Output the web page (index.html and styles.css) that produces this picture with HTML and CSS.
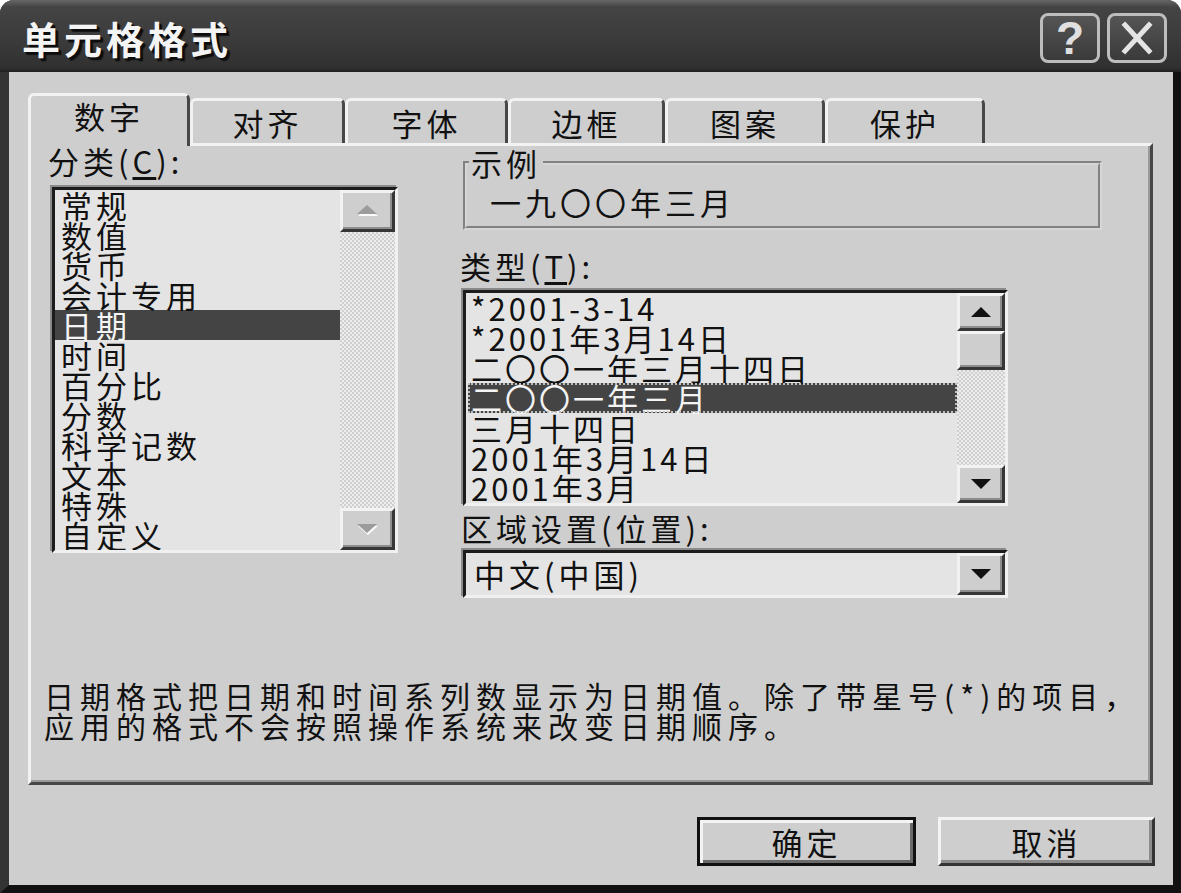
FILE: index.html
```html
<!DOCTYPE html>
<html lang="zh-CN">
<head>
<meta charset="utf-8">
<title>单元格格式</title>
<link rel="stylesheet" href="styles.css">
</head>
<body>
<div class="window">
  <div class="titlebar">
    <div class="title">单元格格式</div>
    <div class="tb-buttons">
      <div class="tb-btn help">?</div>
      <div class="tb-btn close">
        <svg width="40" height="36" viewBox="0 0 40 36"><path d="M8 5 L32 31 M32 5 L8 31" stroke="#e4e4e4" stroke-width="5" stroke-linecap="square"/></svg>
      </div>
    </div>
  </div>
  <div class="frame">
    <div class="tabs">
      <div class="tab active w1">数字</div>
      <div class="tab w2">对齐</div>
      <div class="tab w3">字体</div>
      <div class="tab w4">边框</div>
      <div class="tab w5">图案</div>
      <div class="tab w6">保护</div>
    </div>
    <div class="panel">
      <div class="cols">
        <div class="col-left">
          <div class="label label-cat">分类(<u>C</u>):</div>
          <div class="listbox list-cat">
            <div class="items">
              <div class="item">常规</div>
              <div class="item">数值</div>
              <div class="item">货币</div>
              <div class="item">会计专用</div>
              <div class="item selected">日期</div>
              <div class="item">时间</div>
              <div class="item">百分比</div>
              <div class="item">分数</div>
              <div class="item">科学记数</div>
              <div class="item">文本</div>
              <div class="item">特殊</div>
              <div class="item">自定义</div>
            </div>
            <div class="scrollbar">
              <div class="sbtn sbtn-l"><svg width="24" height="14" viewBox="0 0 24 14"><polygon points="12,3 22,12 2,12" fill="#fafafa"/><polygon points="11,1 21,10 1,10" fill="#9c9c9c"/></svg></div>
              <div class="track"></div>
              <div class="sbtn sbtn-l"><svg width="24" height="14" viewBox="0 0 24 14"><polygon points="2,4 22,4 12,13" fill="#fafafa"/><polygon points="1,2 21,2 11,11" fill="#9c9c9c"/></svg></div>
            </div>
          </div>
        </div>
        <div class="col-right">
          <fieldset class="sample">
            <legend>示例</legend>
            <div class="sample-text">一九〇〇年三月</div>
          </fieldset>
          <div class="label label-type">类型(<u>T</u>):</div>
          <div class="listbox list-type">
            <div class="items">
              <div class="item">*2001-3-14</div>
              <div class="item">*2001年3月14日</div>
              <div class="item">二〇〇一年三月十四日</div>
              <div class="item selected focus">二〇〇一年三月</div>
              <div class="item">三月十四日</div>
              <div class="item">2001年3月14日</div>
              <div class="item">2001年3月</div>
            </div>
            <div class="scrollbar">
              <div class="sbtn sbtn-r"><svg width="20" height="10" viewBox="0 0 20 10"><polygon points="10,0 20,10 0,10" fill="#111"/></svg></div>
              <div class="sbtn thumb"></div>
              <div class="track"></div>
              <div class="sbtn sbtn-r"><svg width="20" height="10" viewBox="0 0 20 10"><polygon points="0,0 20,0 10,10" fill="#111"/></svg></div>
            </div>
          </div>
          <div class="label label-locale">区域设置(位置):</div>
          <div class="combo">
            <div class="combo-text">中文(中国)</div>
            <div class="sbtn combo-btn"><svg width="20" height="10" viewBox="0 0 20 10"><polygon points="0,0 20,0 10,10" fill="#111"/></svg></div>
          </div>
        </div>
      </div>
      <div class="desc">日期格式把日期和时间系列数显示为日期值。除了带星号(*)的项目，<br>应用的格式不会按照操作系统来改变日期顺序。</div>
    </div>
    <div class="buttons">
      <div class="btn btn-default">确定</div>
      <div class="btn">取消</div>
    </div>
  </div>
</div>
</body>
</html>
```

FILE: styles.css
```css
* { box-sizing: border-box; }

html, body {
  margin: 0;
  padding: 0;
  background: #ffffff;
}

body {
  font-family: "Noto Sans CJK SC", "Noto Sans CJK JP", sans-serif;
  font-size: 31px;
  letter-spacing: 4px;
  color: #111111;
}

.window {
  width: 1181px;
  height: 893px;
  display: flex;
  flex-direction: column;
  border-radius: 14px 14px 0 0;
  overflow: hidden;
  background: #262626;
}

/* ---------- title bar ---------- */
.titlebar {
  height: 72px;
  flex: none;
  display: flex;
  align-items: center;
  justify-content: space-between;
  padding: 4px 14px 0 22px;
  background: linear-gradient(#676767 0, #444444 7px, #3b3b3b 40px, #303030 68px, #1f1f1f 72px);
}

.title {
  color: #f4f4f4;
  font-size: 38px;
  font-weight: bold;
  letter-spacing: 4px;
  text-shadow: 2px 2px 0 #0c0c0c, 3px 3px 1px #111111;
  margin-top: -2px;
}

.tb-buttons {
  display: flex;
  gap: 7px;
}

.tb-btn {
  width: 60px;
  height: 50px;
  border: 3px solid #bdbdbd;
  border-radius: 8px;
  background: linear-gradient(#555555, #3a3a3a);
  display: flex;
  align-items: center;
  justify-content: center;
}

.help {
  font-family: "Liberation Sans", Arial, sans-serif;
  font-weight: bold;
  font-size: 46px;
  color: #e0e0e0;
  letter-spacing: 0;
  line-height: 1;
}

/* ---------- frame ---------- */
.frame {
  flex: 1;
  display: flex;
  flex-direction: column;
  background: #cecece;
  border-style: solid;
  border-width: 0 8px 8px 9px;
  border-color: #2c2c2c #111111 #111111 #333333;
  padding: 21px 20px 19px 19px;
}

/* ---------- tabs ---------- */
.tabs {
  height: 50px;
  flex: none;
  display: flex;
  align-items: flex-end;
}

.tab {
  height: 45px;
  padding-top: 4px;
  text-align: center;
  line-height: 36px;
  border-style: solid;
  border-width: 3px 3px 0 3px;
  border-color: #f2f2f2 #474747 transparent #f2f2f2;
  border-radius: 6px 6px 0 0;
  background: #cecece;
}

.tab.active {
  height: 53px;
  margin-bottom: -3px;
  padding-top: 2px;
  position: relative;
  z-index: 2;
}

.w1 { width: 162px; }
.w2 { width: 155px; }
.w3 { width: 163px; }
.w4 { width: 157px; }
.w5 { width: 160px; }
.w6 { width: 160px; }

/* ---------- panel ---------- */
.panel {
  height: 642px;
  flex: none;
  border-style: solid;
  border-width: 3px;
  border-color: #f2f2f2 #474747 #474747 #f2f2f2;
  box-shadow: inset -2px -2px 0 #9a9a9a;
  display: flex;
  flex-direction: column;
}

.cols {
  display: flex;
}

.col-left {
  margin-left: 21px;
  width: 346px;
}

.col-right {
  margin-left: 65px;
  width: 639px;
}

.label {
  line-height: 36px;
  white-space: nowrap;
}

.label u {
  text-underline-offset: 3px;
}

.label-cat {
  margin-top: -3px;
  height: 44px;
  margin-left: -4px;
}

/* ---------- list boxes ---------- */
.listbox {
  display: flex;
  background: #e4e4e4;
  border-style: solid;
  border-width: 3px;
  border-color: #1c1c1c #f0f0f0 #f0f0f0 #1c1c1c;
  box-shadow: -2px -2px 0 #8a8a8a;
}

.list-cat {
  height: 366px;
}

.items {
  flex: 1;
  overflow: hidden;
}

.item {
  height: 30px;
  line-height: 30px;
  white-space: nowrap;
}

.list-cat .item {
  padding-left: 6px;
}

.list-type .item {
  padding-left: 3px;
  margin-left: 2px;
  font-size: 31px;
  letter-spacing: 3px;
}

.item.selected {
  background: #444444;
  color: #f4f4f4;
}

.item.focus {
  outline: 2px dotted #bdbdbd;
  outline-offset: -2px;
}

.scrollbar {
  display: flex;
  flex-direction: column;
  flex: none;
}

.list-cat .scrollbar {
  width: 55px;
}

.list-type .scrollbar {
  width: 48px;
}

.track {
  flex: 1;
  background: repeating-conic-gradient(#ededed 0 25%, #cfcfcf 0 50%) 0 0 / 4px 4px;
}

.sbtn {
  flex: none;
  display: flex;
  align-items: center;
  justify-content: center;
  background: #cecece;
  border-style: solid;
  border-width: 3px;
  border-color: #f2f2f2 #363636 #363636 #f2f2f2;
  box-shadow: inset -2px -2px 0 #8c8c8c;
}

.sbtn-l {
  height: 42px;
}

.sbtn-r {
  height: 38px;
}

.thumb {
  height: 39px;
}

/* ---------- sample group ---------- */
.sample {
  margin: 2px 0 0 0;
  padding: 0;
  height: 82px;
  border: 4px groove #d6d6d6;
  min-width: 0;
}

.sample legend {
  line-height: 30px;
  padding: 0 2px;
  margin-left: 2px;
}

.sample-text {
  line-height: 30px;
  padding-top: 9px;
  padding-left: 23px;
}

.label-type {
  margin-top: 18px;
  margin-left: -3px;
  height: 42px;
}

.list-type {
  width: 545px;
  height: 216px;
}

.label-locale {
  margin-top: 4px;
  margin-left: -2px;
  height: 40px;
}

/* ---------- combo ---------- */
.combo {
  width: 545px;
  height: 48px;
  display: flex;
  background: #e4e4e4;
  border-style: solid;
  border-width: 3px;
  border-color: #1c1c1c #f0f0f0 #f0f0f0 #1c1c1c;
  box-shadow: -2px -2px 0 #8a8a8a;
}

.combo-text {
  flex: 1;
  line-height: 42px;
  padding-left: 8px;
}

.combo-btn {
  width: 48px;
}

/* ---------- description ---------- */
.desc {
  margin-top: 82px;
  margin-left: 13px;
  line-height: 30px;
  font-size: 30px;
  letter-spacing: 6px;
  white-space: nowrap;
}

/* ---------- buttons ---------- */
.buttons {
  display: flex;
  justify-content: flex-end;
  gap: 22px;
  margin-top: 32px;
  margin-right: -2px;
}

.btn {
  width: 217px;
  height: 49px;
  display: flex;
  align-items: center;
  justify-content: center;
  background: #cecece;
  border-style: solid;
  border-width: 3px;
  border-color: #f4f4f4 #343434 #343434 #f4f4f4;
  box-shadow: inset -3px -3px 0 #8c8c8c;
}

.btn-default {
  width: 219px;
  border-color: #111111;
  box-shadow: inset 3px 3px 0 #f4f4f4, inset -3px -3px 0 #6a6a6a;
}
```
